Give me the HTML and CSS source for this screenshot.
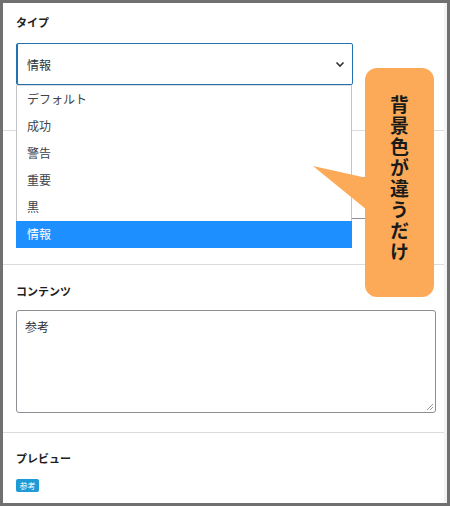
FILE: index.html
```html
<!DOCTYPE html>
<html lang="ja">
<head>
<meta charset="utf-8">
<link rel="stylesheet" href="styles.css">
</head>
<body>
<div class="frame">
  <div class="panel">
    <section class="sec sec-type">
      <div class="label">タイプ</div>
      <div class="select-wrap">
        <div class="select">
          <span>情報</span>
          <svg class="chev" width="10" height="7" viewBox="0 0 10 7"><path d="M1.5 1.5 L5 5 L8.5 1.5" fill="none" stroke="#333" stroke-width="1.6"/></svg>
        </div>
        <ul class="list">
          <li>デフォルト</li>
          <li>成功</li>
          <li>警告</li>
          <li>重要</li>
          <li>黒</li>
          <li class="sel">情報</li>
        </ul>
      </div>
    </section>
    <section class="sec sec-two">
      <div class="label label-blank"></div>
      <div class="input"></div>
    </section>
    <section class="sec sec-content">
      <div class="label">コンテンツ</div>
      <div class="textarea">参考
        <svg class="grip" width="8" height="8" viewBox="0 0 8 8"><path d="M7 1 L1 7 M7 4 L4 7" stroke="#9a9a9a" stroke-width="1" fill="none"/></svg>
      </div>
    </section>
    <section class="sec sec-preview">
      <div class="label">プレビュー</div>
      <span class="badge">参考</span>
    </section>
  </div>
  <div class="callout">
    <svg class="tail" width="54" height="48" viewBox="0 0 54 48"><polygon points="1,2 55,14 55,46" fill="#fdaa58"/></svg>
    <span class="vtext">背景色が違うだけ</span>
  </div>
</div>
</body>
</html>
```

FILE: styles.css
```css
* { box-sizing: border-box; }
html, body { margin: 0; padding: 0; }
body {
  width: 450px;
  height: 506px;
  background: #707070;
  font-family: "Noto Sans CJK JP", "Noto Sans", sans-serif;
  color: #1e1e1e;
}
.frame {
  position: relative;
  width: 450px;
  height: 506px;
  border: 3px solid #707070;
}
.panel {
  width: 444px;
  height: 500px;
  background: #fff;
  border-right: 3px solid #f3f3f3;
}
.sec {
  padding-left: 13px;
  padding-right: 8px;
  border-bottom: 1px solid #dcdcde;
}
.label {
  font-size: 11px;
  line-height: 16px;
  font-weight: 600;
  color: #1e1e1e;
}
.label-blank { height: 16px; }
.sec-type { padding-top: 11px; padding-bottom: 45px; height: 128px; }
.sec-type .label { margin-bottom: 13px; }
.select-wrap { position: relative; width: 337px; }
.select {
  height: 42px;
  border: 1px solid #2271b1;
  box-shadow: inset 1px 0 0 #2271b1;
  border-radius: 2px;
  display: flex;
  align-items: center;
  justify-content: space-between;
  padding: 0 7px 0 10px;
  font-size: 12px;
  color: #2c3338;
}
.chev { display: block; }
.list {
  position: absolute;
  top: 100%;
  left: 0;
  width: 336px;
  margin: 0;
  padding: 0;
  list-style: none;
  background: #fff;
  border: 1px solid #c3c4c7;
  border-top: 1px solid #dcdcde;
  z-index: 2;
}
.list li {
  height: 27px;
  line-height: 25px;
  padding-left: 10px;
  font-size: 12px;
  color: #3c434a;
}
.list li.sel {
  background: #1e8fff;
  color: #fff;
  margin: 0 -1px -1px -1px;
  padding-left: 11px;
  line-height: 26px;
}
.sec-two { padding-top: 16px; height: 134px; }
.sec-two .label { margin-bottom: 14px; }
.input {
  width: 380px;
  height: 42px;
  border: 1px solid #8c8f94;
  border-radius: 2px;
}
.sec-content { padding-top: 18px; height: 168px; }
.sec-content .label { margin-bottom: 11px; }
.textarea {
  position: relative;
  width: 420px;
  height: 103px;
  border: 1px solid #8c8f94;
  border-radius: 3px;
  padding: 8px;
  font-size: 12px;
  line-height: 16px;
  color: #2c3338;
}
.grip {
  position: absolute;
  right: 1px;
  bottom: 1px;
}
.sec-preview { padding-top: 17px; border-bottom: none; }
.sec-preview .label { margin-bottom: 13px; }
.badge {
  display: inline-block;
  width: 23px;
  height: 13px;
  line-height: 13px;
  text-align: center;
  font-size: 8px;
  color: #fff;
  background: #1e9ad6;
  border-radius: 2px;
  vertical-align: top;
}
.callout {
  position: absolute;
  left: 362px;
  top: 65px;
  width: 69px;
  height: 229px;
  background: #fdaa58;
  border-radius: 12px;
  z-index: 3;
  display: flex;
  justify-content: center;
  padding-top: 27px;
}
.tail {
  position: absolute;
  left: -53px;
  top: 96px;
  overflow: visible;
}
.vtext {
  writing-mode: vertical-rl;
  font-size: 19px;
  font-weight: 700;
  letter-spacing: 2px;
  color: #1a1a1a;
  line-height: 1;
}
```
